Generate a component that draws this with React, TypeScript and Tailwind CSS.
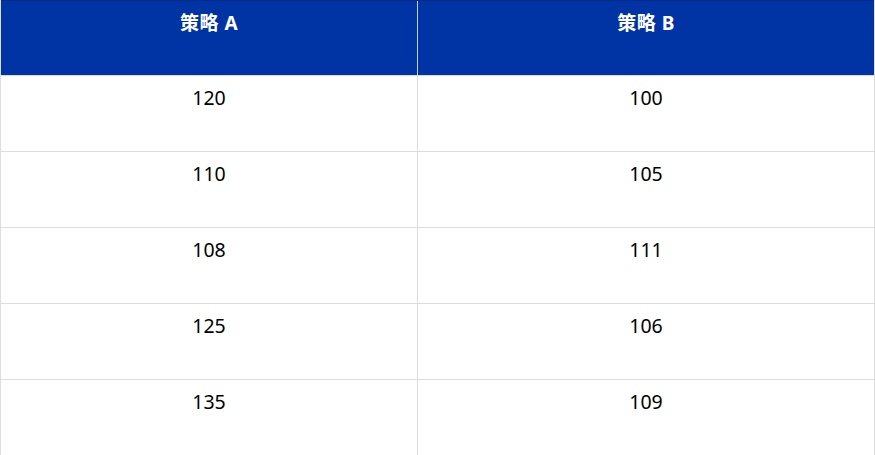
import React from "react";

const rows: [string, string][] = [
  ["120", "100"],
  ["110", "105"],
  ["108", "111"],
  ["125", "106"],
  ["135", "109"],
];

export default function App() {
  return (
    <div
      className="w-[875px] h-[455px] bg-white"
      style={{ fontFamily: '"Noto Sans", "Noto Sans CJK SC", sans-serif' }}
    >
      <div className="w-[875px] border-l border-r border-b border-[#dddddd]">
        <div className="flex h-[76px] bg-[#0033a3] border-t border-[#002a8a] border-b border-b-[#d9d9e6]">
          <div className="w-[417px] border-r border-[#c8cce0] flex justify-center pt-[8px] text-white font-bold text-[19px] leading-[28px] tracking-[0.5px]">
            策略&nbsp;A
          </div>
          <div className="flex-1 flex justify-center pt-[8px] text-white font-bold text-[19px] leading-[28px] tracking-[0.5px]">
            策略&nbsp;B
          </div>
        </div>
        {rows.map(([a, b], i) => (
          <div
            key={i}
            className={`flex h-[76px] ${i < rows.length - 1 ? "border-b border-[#dddddd]" : ""}`}
          >
            <div className="w-[417px] border-r border-[#dddddd] flex justify-center pt-[8px] text-black text-[19.5px] leading-[28px]">
              {a}
            </div>
            <div className="flex-1 flex justify-center pt-[8px] text-black text-[19.5px] leading-[28px]">
              {b}
            </div>
          </div>
        ))}
      </div>
    </div>
  );
}
